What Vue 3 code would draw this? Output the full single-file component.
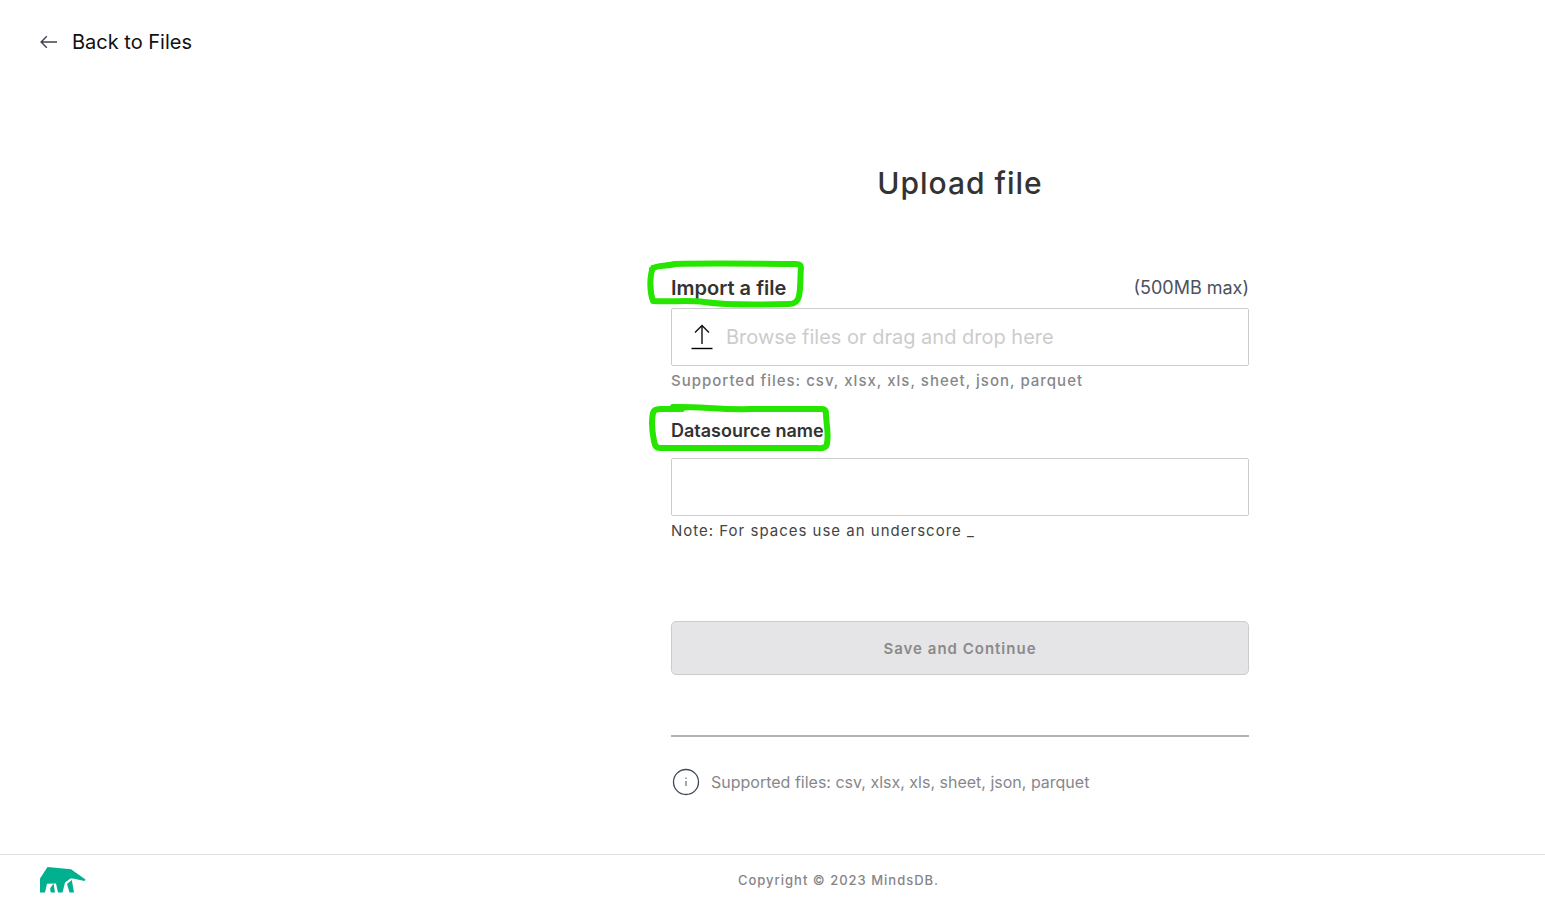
<script setup>
import { ref } from 'vue'

const formats = 'csv, xlsx, xls, sheet, json, parquet'
const datasource = ref('')
</script>

<template>
  <div class="page">
    <header class="top">
      <a class="back" href="#files">
        <svg class="back-icon" viewBox="0 0 18 14" aria-hidden="true">
          <path d="M17 7H1.2M6.8 1.3L1.1 7l5.7 5.7" />
        </svg>
        <span>Back to Files</span>
      </a>
    </header>

    <main class="content">
      <form class="form" @submit.prevent>
        <h1 class="title">Upload file</h1>

        <div class="label-row">
          <label class="label label-large" for="file">
            Import a file
            <svg class="mark mark-file" viewBox="0 0 160 50" aria-hidden="true">
              <path d="M6 9C3 15 2 31 6 42C25 43 43 41 57 43C79 46 109 46 142 45C148 45 151 42 152 37C154 28 153 18 154 9Q154 5 149 5C116 5 72 4 28 5C21 7 8 6 5 10" />
            </svg>
          </label>
          <span class="limit">(500MB max)</span>
        </div>
        <div class="drop">
          <svg class="upload-icon" viewBox="0 0 22 26" aria-hidden="true">
            <path d="M11 20V1.5M4 8.5l7-7 7 7" />
            <path class="tray" d="M0.5 24.5h21" />
          </svg>
          <span>Browse files or drag and drop here</span>
          <input id="file" class="file" type="file" />
        </div>
        <p class="hint hint-files">Supported files: {{ formats }}</p>

        <div class="label-row name-row">
          <label class="label" for="name">
            Datasource name
            <svg class="mark mark-name" viewBox="0 0 190 55" aria-hidden="true">
              <path d="M27 5C51 4 75 8 104 7L176 7Q180 7 180 12C180 21 183 32 181 41Q181 47 171 46L14 46Q9 46 8 39C6 29 5 20 7 11Q8 7 14 7L36 7" />
            </svg>
          </label>
        </div>
        <input id="name" v-model="datasource" class="box" type="text" />
        <p class="hint">Note: For spaces use an underscore _</p>

        <button class="save" type="submit" disabled>Save and Continue</button>
        <hr class="rule" />
        <div class="info">
          <svg class="info-icon" viewBox="0 0 30 30" aria-hidden="true">
            <circle cx="15" cy="15" r="12.5" />
            <path class="info-glyph" d="M15 14v5M15 10.5v1.5" />
          </svg>
          <span>Supported files: {{ formats }}</span>
        </div>
      </form>
    </main>

    <footer class="footer">
      <svg class="logo" viewBox="0 0 46 26" role="img" aria-label="MindsDB">
        <path d="M7.5 0L31 2.3L45.5 12.5L44.5 14L33 11.5L30.5 11.5L25 15.5L22.5 25.5H18L16 16.5L7 16.8L5 25.5H0V11.5Z" />
        <path d="M13.5 16.5L15 25.5H10.8L10 21.5Z" />
        <path d="M31.8 13L34 25.5H29.5L27 17Z" />
      </svg>
      <p class="copyright">Copyright © 2023 MindsDB.</p>
    </footer>
  </div>
</template>

<style>
body {
  margin: 0;
  background: #fff;
}
</style>

<style scoped>
.page {
  display: flex;
  flex-direction: column;
  min-height: 100vh;
  font-family: Inter, "Liberation Sans", sans-serif;
  color: #333;
}

.top {
  padding: 30px 40px 0;
}

.back {
  display: inline-flex;
  align-items: center;
  gap: 14px;
  font-size: 20px;
  line-height: 24px;
  color: #111;
  text-decoration: none;
}

.back-icon {
  width: 18px;
  height: 14px;
  fill: none;
  stroke: #41414d;
  stroke-width: 1.4;
}

.content {
  display: flex;
  flex: 1;
  justify-content: center;
  padding: 109px 24px 40px 399px;
}

.form {
  display: flex;
  flex: 1;
  flex-direction: column;
  max-width: 578px;
}

.title {
  margin: 0 0 73px;
  font-size: 30px;
  font-weight: 500;
  line-height: 40px;
  letter-spacing: 1px;
  text-align: center;
}

.label-row {
  display: flex;
  justify-content: space-between;
  margin-bottom: 8px;
  line-height: 24px;
}

.name-row {
  margin: 28px 0 15px;
}

.label {
  position: relative;
  font-size: 18px;
  font-weight: 600;
}

.label-large {
  font-size: 20px;
}

.limit {
  font-size: 18px;
  color: #4b5161;
}

.mark {
  position: absolute;
  fill: none;
  stroke: #26e600;
  stroke-width: 6;
  stroke-linecap: round;
  stroke-linejoin: round;
  pointer-events: none;
}

.mark-file {
  top: -17px;
  left: -24px;
  width: 160px;
  height: 50px;
}

.mark-name {
  top: -17px;
  left: -25px;
  width: 190px;
  height: 55px;
}

.drop,
.box {
  box-sizing: border-box;
  width: 100%;
  height: 58px;
  border: 1px solid #ccc;
  border-radius: 2px;
  background: #fff;
}

.drop {
  position: relative;
  display: flex;
  align-items: center;
  gap: 13px;
  padding: 0 19px;
  font-size: 20px;
  color: #ccc;
}

.upload-icon {
  width: 22px;
  height: 26px;
  fill: none;
  stroke: #111;
  stroke-width: 1.4;
}

.tray {
  stroke: #000;
}

.file {
  position: absolute;
  inset: 0;
  width: 100%;
  opacity: 0;
  cursor: pointer;
}

.box {
  padding: 0 19px;
  font: inherit;
  font-size: 20px;
}

.hint {
  margin: 5px 0 0;
  font-size: 15px;
  line-height: 20px;
  letter-spacing: 1px;
  color: #444;
}

.hint-files {
  font-weight: 500;
  color: #87878b;
}

.save {
  height: 54px;
  margin: 80px 0 60px;
  border: 1px solid #ccc;
  border-radius: 5px;
  background: #e5e5e7;
  font-family: inherit;
  font-size: 15px;
  font-weight: 600;
  letter-spacing: 1px;
  color: #8a8a8a;
}

.rule {
  width: 100%;
  height: 2px;
  margin: 0 0 30px;
  border: 0;
  background: #b3b3b3;
}

.info {
  display: flex;
  align-items: center;
  gap: 10px;
  font-size: 16px;
  color: #87878b;
}

.info-icon {
  width: 30px;
  height: 30px;
  fill: none;
  stroke: #41485a;
  stroke-width: 1.3;
}

.info-glyph {
  stroke: #77777d;
}

.footer {
  display: grid;
  grid-template-columns: 92px 1fr;
  align-items: center;
  height: 45px;
  padding-left: 40px;
  border-top: 1px solid #e2e2e2;
}

.logo {
  width: 46px;
  height: 26px;
  margin-top: 4px;
  fill: #00b08e;
}

.copyright {
  margin: 4px 0 0;
  font-size: 13px;
  font-weight: 500;
  letter-spacing: 1px;
  text-align: center;
  color: #858589;
}
</style>
